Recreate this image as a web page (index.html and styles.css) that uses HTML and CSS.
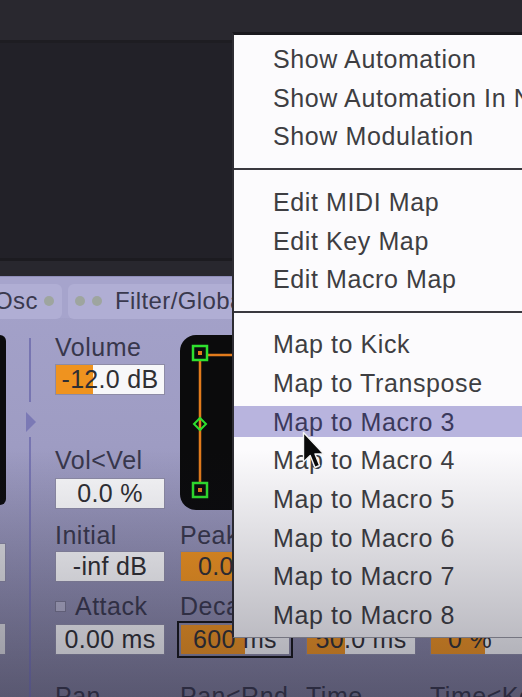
FILE: index.html
```html
<!DOCTYPE html>
<html>
<head>
<meta charset="utf-8">
<link rel="stylesheet" href="styles.css">
</head>
<body>
<div class="screen">
  <div class="top-strip"></div>
  <div class="arrange"></div>
  <div class="lower-strip"></div>
  <div class="device">
    <div class="tabs">
      <div class="tab tab-osc"><span class="tab-label">Osc</span><span class="led led-osc"></span></div>
      <div class="tab tab-filter"><span class="led"></span><span class="led led-2"></span><span class="tab-label tab-label-filter">Filter/Global</span></div>
    </div>
    <div class="params">
      <div class="col col-a">
        <div class="stub-display"></div>
        <div class="stub-box stub-box-1"></div>
        <div class="stub-box stub-box-2"></div>
      </div>
      <div class="col col-div">
        <div class="div-line div-line-top"></div>
        <div class="div-arrow"></div>
        <div class="div-line div-line-bottom"></div>
      </div>
      <div class="col col-b">
        <div class="label">Volume</div>
        <div class="val val-r1" style="--fill:34%">-12.0 dB</div>
        <div class="label mt-vel">Vol&lt;Vel</div>
        <div class="val val-r2">0.0 %</div>
        <div class="label mt-init">Initial</div>
        <div class="val val-r3">-inf dB</div>
        <div class="label label-check mt-att"><span class="check"></span>Attack</div>
        <div class="val val-r4">0.00 ms</div>
        <div class="label mt-pan">Pan</div>
      </div>
      <div class="col col-c">
        <div class="env">
          <svg class="env-svg" width="110" height="175" viewBox="0 0 110 175">
            <line x1="27" y1="20" x2="110" y2="20" stroke="#e27b1c" stroke-width="2.5"/>
            <line x1="20" y1="18" x2="20" y2="155" stroke="#e27b1c" stroke-width="2.5"/>
            <rect x="13" y="11" width="14" height="14" fill="#0b0b0c" stroke="#2ee02e" stroke-width="2.5"/>
            <rect x="18" y="16" width="4" height="4" fill="#e27b1c"/>
            <rect x="13" y="148" width="14" height="14" fill="#0b0b0c" stroke="#2ee02e" stroke-width="2.5"/>
            <rect x="18" y="153" width="4" height="4" fill="#e27b1c"/>
            <polygon points="20,83 26,89 20,95 14,89" fill="none" stroke="#2ee02e" stroke-width="2"/>
          </svg>
        </div>
        <div class="label mt-peak">Peak</div>
        <div class="val val-r3" style="--fill:100%">0.0 dB</div>
        <div class="label mt-att">Decay</div>
        <div class="val val-r4 val-sel" style="--fill:59%">600 ms</div>
        <div class="label mt-pan">Pan&lt;Rnd</div>
      </div>
      <div class="col col-d">
        <div class="val val-far" style="--fill:35%">50.0 ms</div>
        <div class="label mt-pan">Time</div>
      </div>
      <div class="col col-e">
        <div class="val val-far val-e" style="--fill:50%">0 %</div>
        <div class="label mt-pan">Time&lt;Key</div>
      </div>
    </div>
  </div>
</div>

<div class="menu">
  <div class="menu-section first">
    <div class="item">Show Automation</div>
    <div class="item">Show Automation In New Lane</div>
    <div class="item">Show Modulation</div>
  </div>
  <div class="sep"></div>
  <div class="menu-section">
    <div class="item">Edit MIDI Map</div>
    <div class="item">Edit Key Map</div>
    <div class="item">Edit Macro Map</div>
  </div>
  <div class="sep"></div>
  <div class="menu-section last">
    <div class="item">Map to Kick</div>
    <div class="item">Map to Transpose</div>
    <div class="item active">Map to Macro 3</div>
    <div class="item">Map to Macro 4</div>
    <div class="item">Map to Macro 5</div>
    <div class="item">Map to Macro 6</div>
    <div class="item">Map to Macro 7</div>
    <div class="item">Map to Macro 8</div>
  </div>
</div>

<div class="shade"></div>

<svg class="cursor" width="23" height="40" viewBox="0 0 23 40">
  <path d="M1.5,1.5 L1.5,31 L8.2,24.5 L13,36.5 L17.6,34.5 L13,23 L21.8,23 Z" fill="#0a0a0a" stroke="#f4f4f4" stroke-width="1.4" stroke-linejoin="round"/>
</svg>
</body>
</html>
```

FILE: styles.css
```css
* { box-sizing: border-box; }

html, body {
  margin: 0;
  padding: 0;
}

body {
  width: 522px;
  height: 697px;
  overflow: hidden;
  position: relative;
  background: #222128;
  font-family: "Liberation Sans", Arial, sans-serif;
}

.screen {
  width: 522px;
  height: 697px;
  display: flex;
  flex-direction: column;
  overflow: hidden;
}

.top-strip {
  flex: none;
  height: 43px;
  background: #29282f;
  border-bottom: 3px solid #1e1d22;
}

.arrange {
  flex: none;
  height: 218px;
  background: #222128;
  border-bottom: 3px solid #1c1b20;
}

.lower-strip {
  flex: none;
  height: 15px;
  background: #28272e;
}

.device {
  flex: 1;
  background: linear-gradient(to bottom, #a4a2ca 0, #9e9cc3 170px, #8e8caf 300px, #807e9a 421px);
}

/* tabs */
.tabs {
  height: 42px;
  padding-top: 7px;
  display: flex;
  gap: 6px;
  background: #a6a4cc;
  border-top: 1px solid #8f8db8;
}

.tab {
  flex: none;
  height: 35px;
  display: flex;
  align-items: center;
  padding-bottom: 2px;
  background: #b0aed4;
  border-radius: 6px;
  font-size: 24px;
  letter-spacing: 0.4px;
  color: #3a394e;
  white-space: nowrap;
}

.tab-osc {
  width: 76px;
  margin-left: -14px;
  padding-left: 8px;
}

.tab-filter {
  width: 240px;
  padding-left: 7px;
}

.led {
  flex: none;
  width: 10px;
  height: 10px;
  border-radius: 50%;
  background: #9ea59f;
}

.led-osc { margin-left: 6px; }
.led-2 { margin-left: 7px; }
.tab-label-filter { margin-left: 13px; }

/* parameter area */
.params {
  display: flex;
  padding-top: 15px;
}

.col {
  flex: none;
  display: flex;
  flex-direction: column;
}

.col-a { width: 6px; margin-right: 20px; }
.col-div { width: 10px; margin-right: 19px; height: 379px; }
.col-b { width: 110px; margin-right: 15px; }
.col-c { width: 110px; margin-right: 16px; }
.col-d { width: 110px; margin-right: 14px; }
.col-e { width: 110px; }

.stub-display {
  margin-top: 2px;
  height: 170px;
  background: #0c0c0e;
  border-radius: 0 8px 8px 0;
}

.stub-box {
  background: #dcdce0;
  border: 1px solid #8886a2;
  border-left: none;
}

.stub-box-1 { margin-top: 38px; height: 39px; }
.stub-box-2 { margin-top: 41px; height: 32px; }

.div-line {
  width: 2px;
  margin-left: 3px;
  background: #7775b1;
}

.div-line-top { margin-top: 5px; height: 64px; }
.div-line-bottom { margin-top: 5px; flex: 1; }

.div-arrow {
  margin-top: 10px;
  width: 0;
  height: 0;
  border-left: 10px solid #7b79b5;
  border-top: 10px solid transparent;
  border-bottom: 10px solid transparent;
}

.label {
  height: 28px;
  line-height: 28px;
  font-size: 25px;
  letter-spacing: 0.5px;
  color: #38374c;
  white-space: nowrap;
}

.label-check {
  display: flex;
  align-items: center;
}

.check {
  flex: none;
  width: 11px;
  height: 11px;
  margin-right: 9px;
  border: 1px solid #77758f;
  background: #b0aec8;
}

.mt-vel { margin-top: 51px; }
.mt-init { margin-top: 12px; }
.mt-att { margin-top: 10px; }
.mt-pan { margin-top: 27px; }
.mt-peak { margin-top: 11px; }

.val {
  height: 31px;
  line-height: 29px;
  border: 1px solid #8d8ba6;
  text-align: center;
  font-size: 25px;
  letter-spacing: 0.3px;
  color: #2f2f33;
  white-space: nowrap;
  background: linear-gradient(to right, #ef931f var(--fill, 0%), #f7f7f9 var(--fill, 0%));
}

.val-r1 { margin-top: 3px; }
.val-r2 { margin-top: 4px; }
.val-r3 { margin-top: 2px; }
.val-r4 { margin-top: 4px; }
.val-far { margin-top: 291px; }

.val-sel {
  outline: 2px solid #141416;
  outline-offset: 1px;
}

.val-e { padding-right: 30px; }

.env {
  margin-top: 2px;
  height: 175px;
  background: #0b0b0c;
  border-radius: 16px;
  overflow: hidden;
}

.env-svg { display: block; }

/* context menu */
.menu {
  position: absolute;
  left: 232px;
  top: 32px;
  width: 310px;
  background: #fcfbfd;
  border-top: 3px solid #1a191e;
  border-left: 2px solid #2e2d33;
  border-bottom: 1px solid #9a9aa2;
  font-size: 25px;
  letter-spacing: 0.6px;
  color: #3e3e42;
}

.menu-section { padding: 13px 0 12px; }
.menu-section.first { padding-top: 5px; }
.menu-section.last { padding-top: 12px; padding-bottom: 2px; }

.sep {
  height: 2px;
  background: #3a393f;
}

.item {
  height: 38.7px;
  line-height: 38.7px;
  padding-left: 39px;
  white-space: nowrap;
  overflow: hidden;
}

.item.active {
  color: #3b395c;
  background: linear-gradient(to bottom, transparent 3px, #b8b4de 3px, #b8b4de calc(100% - 4px), transparent calc(100% - 4px));
}

.shade {
  position: absolute;
  left: 0;
  top: 0;
  width: 522px;
  height: 697px;
  pointer-events: none;
  background: linear-gradient(to bottom, rgba(20, 20, 40, 0) 450px, rgba(20, 20, 40, 0.36) 697px);
}

.cursor {
  position: absolute;
  left: 302px;
  top: 431px;
}
```
